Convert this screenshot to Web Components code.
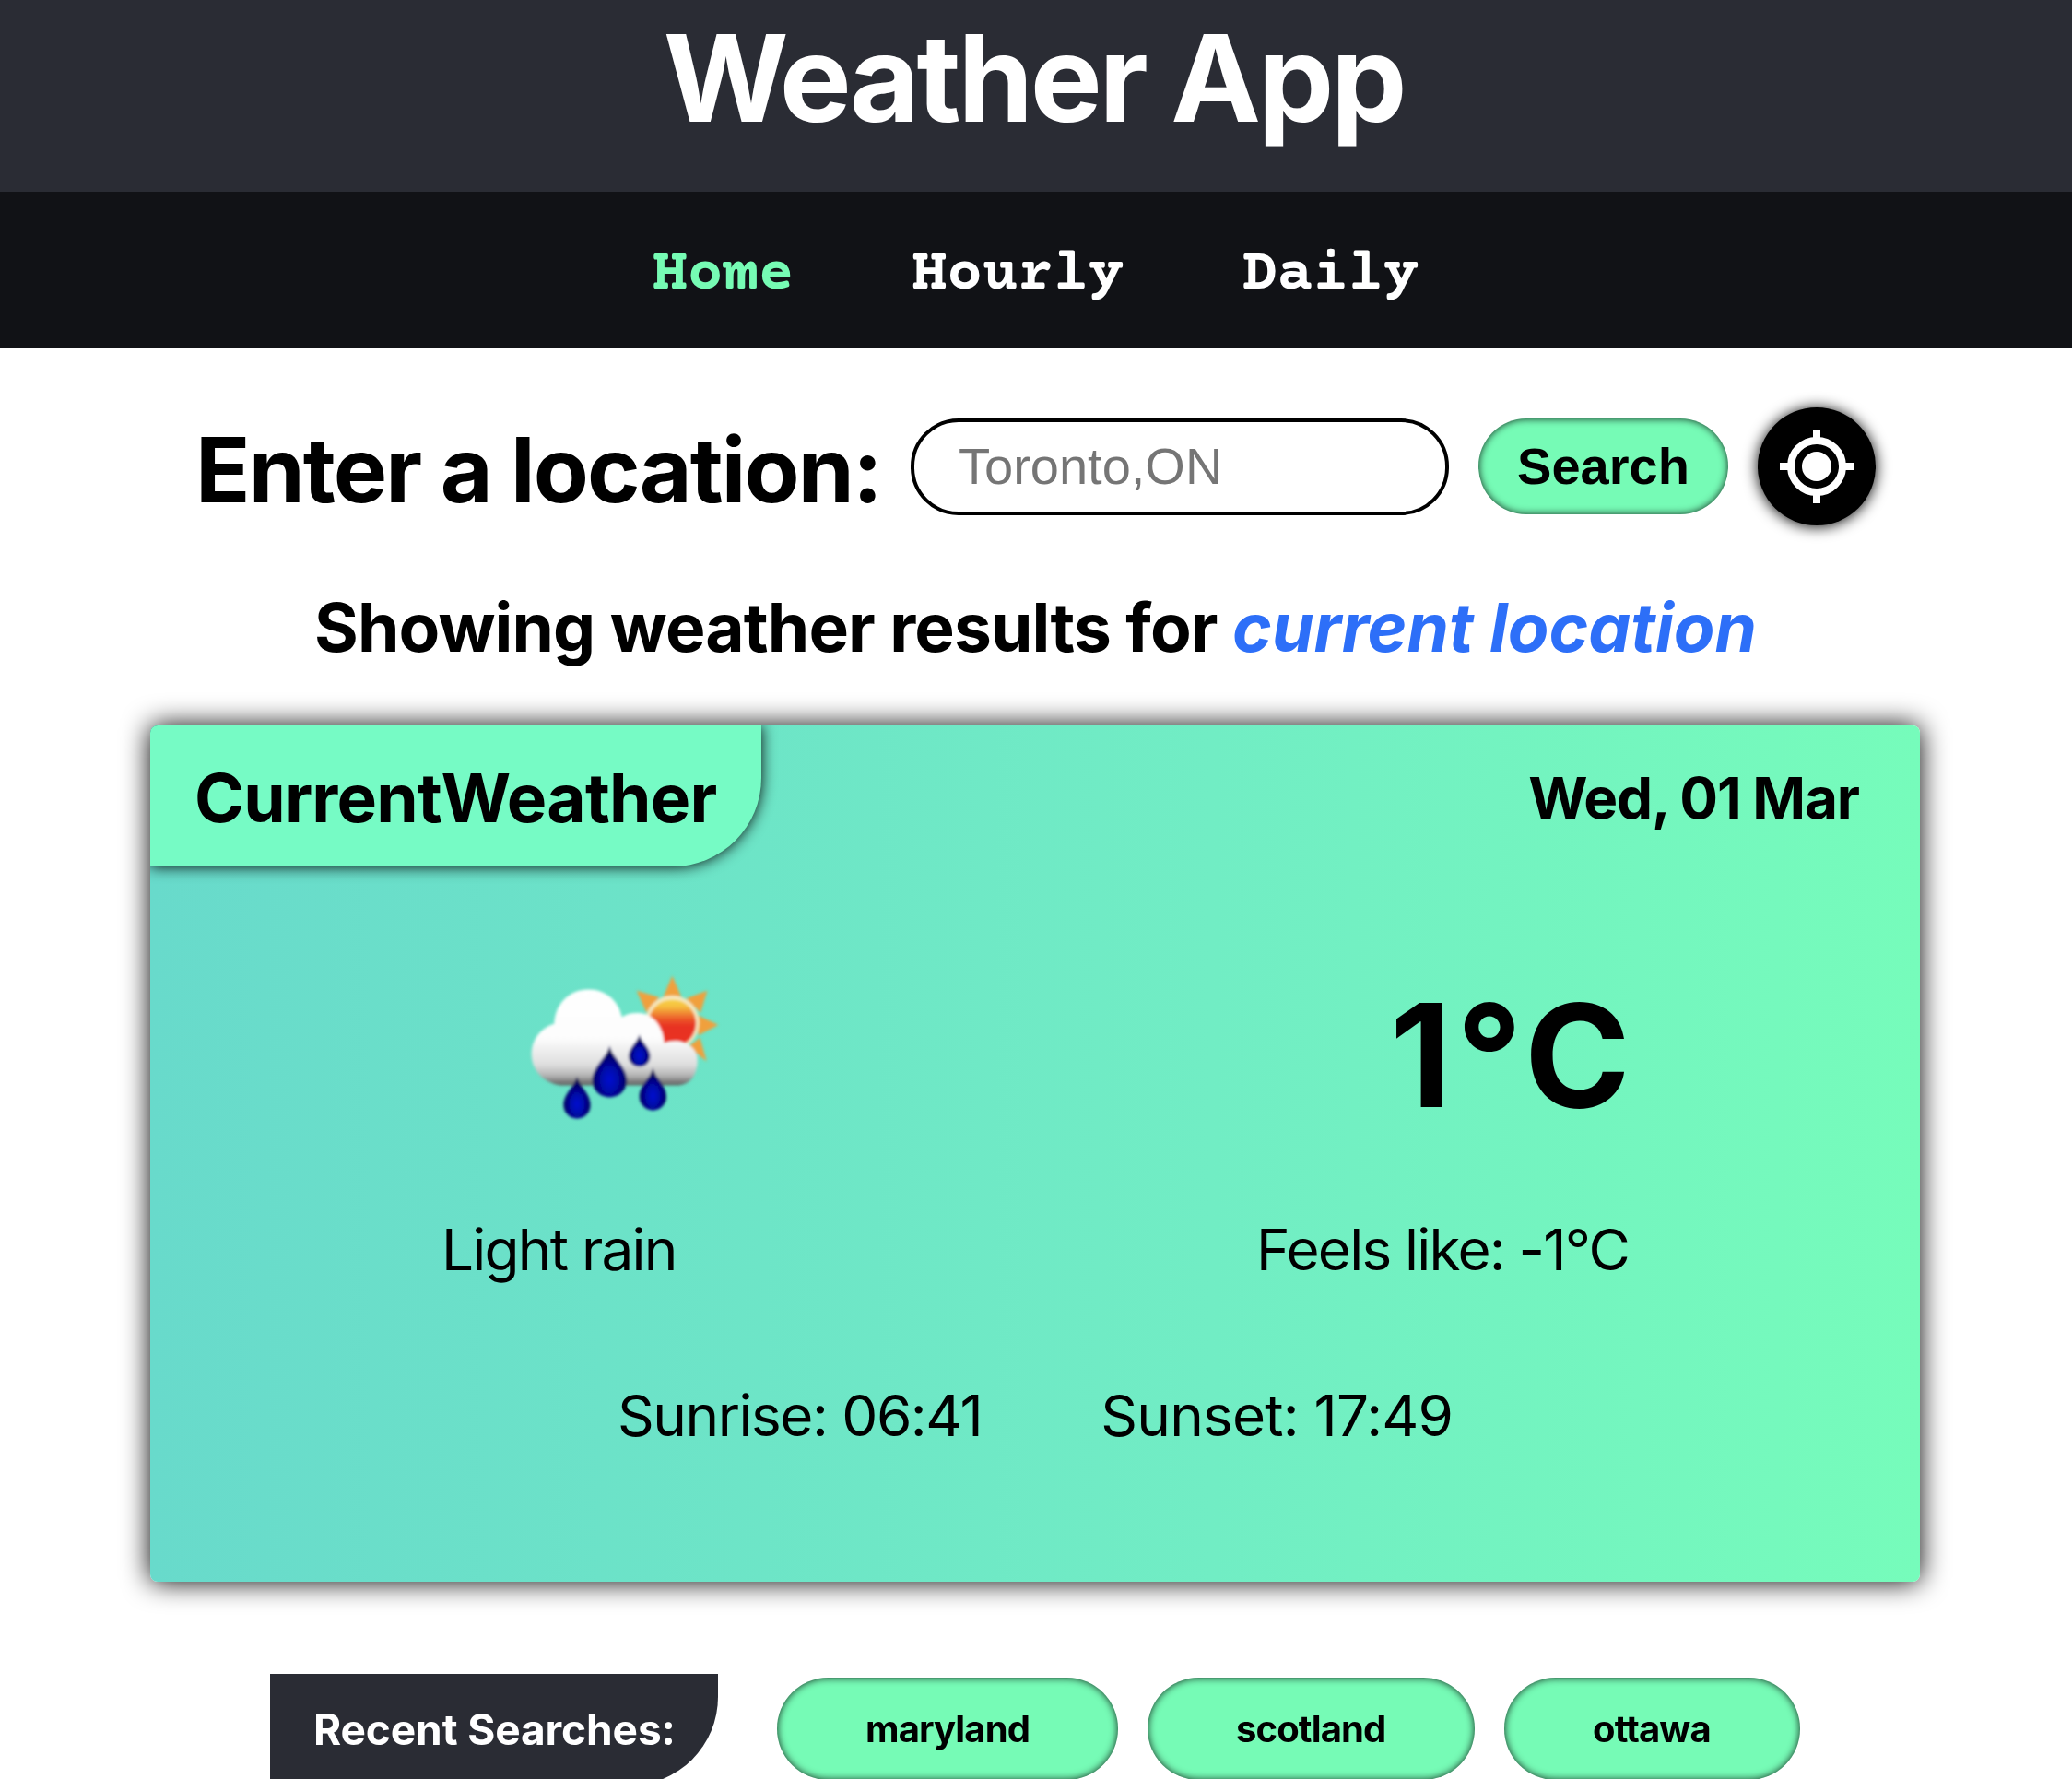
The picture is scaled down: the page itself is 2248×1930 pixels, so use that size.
<!DOCTYPE html>
<html lang="en">
<head>
<meta charset="utf-8">
<title>Weather App</title>
<style>
html,body{margin:0;background:#fff}
body{height:1930px;overflow:hidden;font-family:Inter,"Liberation Sans",sans-serif;color:#000}
</style>
</head>
<body>
<weather-app></weather-app>
<script>
const define = (name, html) => customElements.define(name, class extends HTMLElement {
  constructor() {
    super();
    const t = document.createElement('template');
    t.innerHTML = html;
    this.attachShadow({ mode: 'open' }).append(t.content.cloneNode(true));
  }
});

define('app-header', `
<style>
:host{display:block;height:208px;background:#2a2c34;color:#fff;text-align:center}
h1{margin:0 5px 0 0;font-size:131px;font-weight:700;line-height:169px;letter-spacing:-3.3px}
</style>
<h1><slot></slot></h1>`);

define('nav-link', `
<style>
:host{display:block;color:#fff}
:host([active]){color:#76fbb4}
a{color:inherit;text-decoration:none}
</style>
<a><slot></slot></a>`);

define('app-nav', `
<style>
:host{display:block;background:#111216}
nav{display:flex;justify-content:center;gap:128px;padding:11px 1px 0 0;line-height:159px;
 font-family:"Courier Prime","Liberation Mono",monospace;font-size:64px;font-weight:700}
nav{padding-top:12px;line-height:158px}
</style>
<nav><slot></slot></nav>`);

define('locate-button', `
<style>
:host{display:block;flex:none}
button{display:flex;align-items:center;justify-content:center;width:128px;height:128px;padding:0;border:0;border-radius:50%;background:#000;box-shadow:0 1px 16px #000}
svg{display:block}
</style>
<button aria-label="Use current location"><svg width="80" height="80" viewBox="0 0 80 80">
<circle cx="40" cy="40" r="16" fill="#fff"/>
<circle cx="40" cy="40" r="28" fill="none" stroke="#fff" stroke-width="8"/>
<path d="M40 0V10M40 70V80M0 40H10M70 40H80" stroke="#fff" stroke-width="8"/>
</svg></button>`);

define('search-bar', `
<style>
:host{display:flex;align-items:center;gap:32px;height:128px;padding-left:212px;margin-top:64px}
label{flex:none;width:744px;padding-top:7px;box-sizing:border-box;font-size:98px;font-weight:700;line-height:120px;letter-spacing:-1.87px;white-space:nowrap}
input{flex:none;box-sizing:border-box;width:584px;height:105px;padding:0 48px 1px;border:4px solid #000;border-radius:52px;background:#fff;font:56px "Liberation Sans",Arial,sans-serif;outline:0}
input::placeholder{color:#757575;opacity:1}
.go{flex:none;width:271px;height:104px;padding:0 0 1px;border:0;border-radius:52px;background:#76fbb6;color:#000;font:700 56px "Liberation Sans",Arial,sans-serif;box-shadow:inset 0 0 8px rgba(0,0,0,.85)}
</style>
<label for="q"><slot></slot></label>
<input id="q" placeholder="Toronto,ON">
<button class="go">Search</button>
<locate-button></locate-button>`);

define('result-heading', `
<style>
:host{display:block;margin-top:60px;padding-left:341px}
h2{margin:0;font-size:73px;font-weight:700;line-height:101px;letter-spacing:-.87px;white-space:nowrap}
em{color:#2d6ff8;letter-spacing:-.05px}
</style>
<h2>Showing weather results for <em><slot></slot></em></h2>`);

define('rain-icon', `
<style>:host{display:block}svg{display:block}</style>
<svg width="260" height="200" viewBox="0 0 780 600">
<defs>
<linearGradient id="c" gradientUnits="userSpaceOnUse" x1="0" y1="100" x2="0" y2="415"><stop offset="0" stop-color="#fff"/><stop offset=".5" stop-color="#fdfdfd"/><stop offset=".78" stop-color="#dedede"/><stop offset=".89" stop-color="#b4b4b4"/><stop offset="1" stop-color="#555"/></linearGradient>
<linearGradient id="s" gradientUnits="userSpaceOnUse" x1="0" y1="128" x2="0" y2="290"><stop offset="0" stop-color="#f8d84a"/><stop offset=".18" stop-color="#f6bd3e"/><stop offset=".42" stop-color="#ec5a2a"/><stop offset=".56" stop-color="#e83323"/><stop offset="1" stop-color="#ea3423"/></linearGradient>
<radialGradient id="d" cx=".5" cy=".66" r=".55"><stop offset="0" stop-color="#0611d0"/><stop offset=".4" stop-color="#0408ae"/><stop offset="1" stop-color="#02024c"/></radialGradient>
<filter id="b" x="-5%" y="-5%" width="110%" height="110%"><feGaussianBlur stdDeviation="5"/></filter>
<path id="drop" d="M0-88C-6-50-56-22-56 26A56 54 0 0 0 56 26C56-22 6-50 0-88Z"/>
</defs>
<g filter="url(#b)">
<path fill="#f0a03c" d="M568 56L600 130H536ZM452 104L526 126 484 176ZM682 104L660 176 612 130ZM718 216L652 250V184ZM680 334L620 286 658 258Z"/>
<circle cx="568" cy="208" r="88" fill="#f6e8c0"/>
<circle cx="568" cy="210" r="77" fill="url(#s)"/>
<path fill="url(#c)" d="M205 412C150 406 108 362 110 308C112 258 144 224 184 212C186 148 232 100 296 100C352 100 394 138 404 190C420 180 438 176 458 177C504 178 538 218 542 274C590 254 646 280 650 324C652 372 632 408 590 412Z"/>
<g fill="url(#d)">
<use href="#drop" transform="translate(364 371)"/>
<use href="#drop" transform="translate(461 302) scale(.62 .62)"/>
<use href="#drop" transform="translate(258 455) scale(.78 .82)"/>
<use href="#drop" transform="translate(505 428) scale(.78 .82)"/>
</g>
</g>
</svg>`);

define('weather-card', `
<style>
:host{display:block;width:1920px;height:929px;margin:56px 0 0 163px;border-radius:8px;background:linear-gradient(90deg,#68dacb,#71edc4 60%,#76fcbb);box-shadow:0 0 30px #000}
.top{display:flex;justify-content:space-between;line-height:149px;font-weight:700;white-space:nowrap}
.tag{box-sizing:border-box;width:663px;height:153px;padding:4px 0 0 48px;border-radius:8px 0 96px 0;background:#76fbc5;font-size:73px;letter-spacing:-.78px;box-shadow:0 0 16px rgba(0,0,0,.95);clip-path:inset(0 -30px -30px 0 round 8px 0 0 0)}
.date{padding:4px 66px 0 0;font-size:62px;letter-spacing:-1.1px;word-spacing:-1px}
.row{display:grid;grid-template-columns:1fr 1fr;align-items:center}
.main{height:320px;padding-top:40px}
.main rain-icon{margin-left:377px}
.temp{padding:9px 0 0 385px;font-size:155px;font-weight:700;letter-spacing:5.3px;line-height:200px}
.desc{height:110px;font-size:62px;letter-spacing:-1.76px}
.desc>:first-child{padding-left:316px}
.desc>:last-child{padding-left:240px}
.sun{display:flex;align-items:center;gap:129px;height:250px;padding-left:507px;font-size:62px;letter-spacing:-1.48px}
.sun>:last-child{letter-spacing:-.78px}
</style>
<div class="top"><div class="tag"><slot name="title"></slot></div><div class="date"><slot name="date"></slot></div></div>
<div class="row main"><rain-icon></rain-icon><div class="temp"><slot name="temp"></slot></div></div>
<div class="row desc"><div><slot name="desc"></slot></div><div><slot name="feels"></slot></div></div>
<div class="sun"><div><slot name="sunrise"></slot></div><div><slot name="sunset"></slot></div></div>`);

define('search-chip', `
<style>
:host{display:block;flex:none}
button{display:block;width:100%;height:111px;padding:0 0 0 96px;text-align:left;border:0;border-radius:56px;background:#76fbb6;color:#000;font:700 40px/111px Inter,sans-serif;letter-spacing:-.87px;box-shadow:inset 0 0 9px rgba(0,0,0,.85)}
</style>
<button><slot></slot></button>`);

define('recent-searches', `
<style>
:host{display:flex;align-items:flex-start;margin:100px 0 0 293px}
h3{flex:none;box-sizing:border-box;width:486px;height:121px;margin:0 64px 0 0;padding-left:47px;border-radius:0 0 96px 0;background:#2a2c34;color:#fff;font-size:46px;font-weight:700;line-height:121px;letter-spacing:-.1px;white-space:nowrap}
.chips{display:flex;gap:32px;padding-top:4px}
</style>
<h3>Recent Searches:</h3><div class="chips"><slot></slot></div>`);

define('weather-app', `
<style>
:host{display:block}
search-chip:nth-of-type(1){width:370px}
search-chip:nth-of-type(2){width:355px}
search-chip:nth-of-type(3){width:321px}
</style>
<app-header>Weather App</app-header>
<app-nav><nav-link active>Home</nav-link><nav-link>Hourly</nav-link><nav-link>Daily</nav-link></app-nav>
<search-bar>Enter a location:</search-bar>
<result-heading>current location</result-heading>
<weather-card>
<span slot="title">CurrentWeather</span><span slot="date">Wed, 01 Mar</span>
<span slot="temp">1°C</span><span slot="desc">Light rain</span><span slot="feels">Feels like: -1°C</span>
<span slot="sunrise">Sunrise: 06:41</span><span slot="sunset">Sunset: 17:49</span>
</weather-card>
<recent-searches><search-chip>maryland</search-chip><search-chip>scotland</search-chip><search-chip>ottawa</search-chip></recent-searches>`);
</script>
</body>
</html>
